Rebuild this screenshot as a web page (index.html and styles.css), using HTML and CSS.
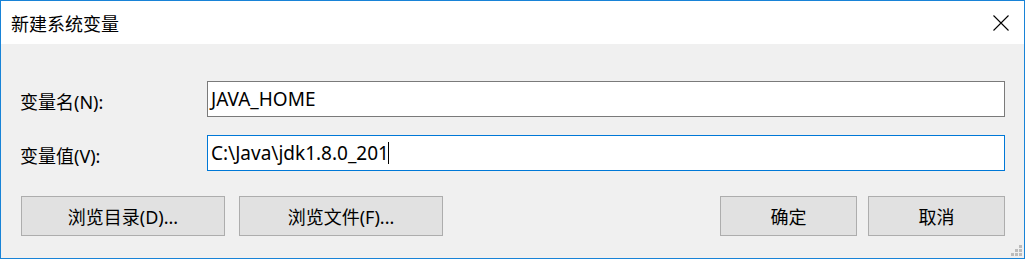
FILE: index.html
```html
<!DOCTYPE html>
<html>
<head>
    <title>新建系统变量</title>
    <link rel="stylesheet" href="styles.css">
</head>
<body>
    <div class="window">
        <div class="titlebar">
            <span class="title">新建系统变量</span>
            <svg class="close-icon" width="16" height="16" viewBox="0 0 16 16">
                <path d="M0.5 0.5 L15.5 15.5 M15.5 0.5 L0.5 15.5" stroke="#000" stroke-width="1.1" fill="none"/>
            </svg>
        </div>
        <div class="dialog-body">
            <div class="fields">
                <label class="field-label">变量名(N):</label>
                <div class="text-field">JAVA_HOME</div>
                <label class="field-label">变量值(V):</label>
                <div class="text-field focused">C:\Java\jdk1.8.0_201<span class="caret"></span></div>
            </div>
            <div class="button-row">
                <div class="button-group">
                    <button class="btn btn-wide">浏览目录(D)...</button>
                    <button class="btn btn-wide">浏览文件(F)...</button>
                </div>
                <div class="button-group button-group-right">
                    <button class="btn">确定</button>
                    <button class="btn">取消</button>
                </div>
            </div>
        </div>
        <!-- resize grip -->
        <svg class="grip" width="11" height="11" viewBox="0 0 11 11">
            <rect x="8" y="0" width="3" height="3"/>
            <rect x="4" y="4" width="3" height="3"/>
            <rect x="8" y="4" width="3" height="3"/>
            <rect x="0" y="8" width="3" height="3"/>
            <rect x="4" y="8" width="3" height="3"/>
            <rect x="8" y="8" width="3" height="3"/>
        </svg>
    </div>
</body>
</html>
```

FILE: styles.css
```css
body {
    margin: 0;
    font-family: "Noto Sans", "Noto Sans CJK SC", sans-serif;
    color: #000;
}
.window {
    position: relative;
    width: 1025px;
    height: 259px;
    box-sizing: border-box;
    border: 1px solid #1883d7;
    background: #f0f0f0;
    display: flex;
    flex-direction: column;
}
.titlebar {
    height: 43px;
    background: #fff;
    display: flex;
    align-items: center;
    justify-content: space-between;
    padding: 0 15px 0 10px;
}
.title {
    font-size: 18px;
}
.close-icon {
    display: block;
}
.dialog-body {
    padding: 37px 19px 0 19px;
    display: flex;
    flex-direction: column;
}
.fields {
    display: grid;
    grid-template-columns: 187px 1fr;
    grid-auto-rows: 36px;
    row-gap: 18px;
    align-items: center;
}
.field-label {
    font-size: 18px;
    padding-top: 3px;
}
.text-field {
    height: 36px;
    box-sizing: border-box;
    border: 1px solid #7a7a7a;
    background: #fff;
    padding: 0 3px;
    font-size: 19px;
    display: flex;
    align-items: center;
    white-space: pre;
}
.text-field.focused {
    border-color: #0078d7;
}
.caret {
    width: 1px;
    height: 22px;
    background: #000;
    margin-left: -1px;
}
.button-row {
    margin-top: 25px;
    padding-left: 1px;
    display: flex;
    justify-content: space-between;
}
.button-group {
    display: flex;
    gap: 14px;
}
.button-group-right {
    gap: 11px;
}
.btn {
    width: 137px;
    height: 40px;
    box-sizing: border-box;
    border: 1px solid #adadad;
    background: #e1e1e1;
    font-family: inherit;
    font-size: 18px;
    color: #000;
    padding: 0;
}
.btn-wide {
    width: 204px;
}
.grip {
    position: absolute;
    right: 2px;
    bottom: 2px;
    fill: #bcbcbc;
}
```
